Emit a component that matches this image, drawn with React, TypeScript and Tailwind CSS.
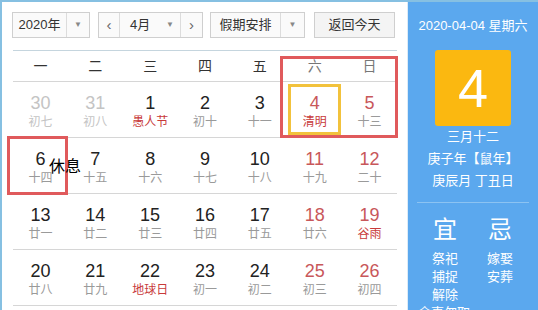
import React from 'react'

type Day = {
  n: number
  lunar: string
  other?: boolean
  weekend?: boolean
  fest?: boolean
}

const weekdays = ['一', '二', '三', '四', '五', '六', '日']

const rows: Day[][] = [
  [
    { n: 30, lunar: '初七', other: true },
    { n: 31, lunar: '初八', other: true },
    { n: 1, lunar: '愚人节', fest: true },
    { n: 2, lunar: '初十' },
    { n: 3, lunar: '十一' },
    { n: 4, lunar: '清明', weekend: true, fest: true },
    { n: 5, lunar: '十三', weekend: true },
  ],
  [
    { n: 6, lunar: '十四' },
    { n: 7, lunar: '十五' },
    { n: 8, lunar: '十六' },
    { n: 9, lunar: '十七' },
    { n: 10, lunar: '十八' },
    { n: 11, lunar: '十九', weekend: true },
    { n: 12, lunar: '二十', weekend: true },
  ],
  [
    { n: 13, lunar: '廿一' },
    { n: 14, lunar: '廿二' },
    { n: 15, lunar: '廿三' },
    { n: 16, lunar: '廿四' },
    { n: 17, lunar: '廿五' },
    { n: 18, lunar: '廿六', weekend: true },
    { n: 19, lunar: '谷雨', weekend: true, fest: true },
  ],
  [
    { n: 20, lunar: '廿八' },
    { n: 21, lunar: '廿九' },
    { n: 22, lunar: '地球日', fest: true },
    { n: 23, lunar: '初一' },
    { n: 24, lunar: '初二' },
    { n: 25, lunar: '初三', weekend: true },
    { n: 26, lunar: '初四', weekend: true },
  ],
]

function Caret() {
  return <span className="text-[8px] leading-none text-[#888]">▼</span>
}

function DayCell({ d }: { d: Day }) {
  const numColor = d.other ? 'text-[#c4c4c4]' : d.weekend ? 'text-[#c8575a]' : 'text-[#222]'
  const lunarColor = d.fest ? 'text-[#c83a3a]' : d.other ? 'text-[#c4c4c4]' : 'text-[#9a9a9a]'
  return (
    <div className="flex h-[55px] flex-col items-center pt-[10px]">
      <span className={`text-[18px] leading-[22px] ${numColor}`}>{d.n}</span>
      <span className={`text-[12px] leading-[16px] ${lunarColor}`}>{d.lunar}</span>
    </div>
  )
}

export default function App() {
  return (
    <div
      className="flex h-[310px] w-[538px] overflow-hidden border-l-2 border-t-2 border-[#86c0e2] bg-white"
      style={{ fontFamily: '"Liberation Sans", "Noto Sans CJK SC", sans-serif' }}
    >
      <div className="w-[405px] shrink-0 bg-white px-[10px] pt-[10px]">
        <div className="flex h-[26px] items-stretch text-[13px] text-[#333]">
          <div className="flex w-[78px] border border-[#cfcfcf] bg-[#fafafa]">
            <span className="flex flex-1 items-center justify-center">2020年</span>
            <span className="flex w-[23px] items-center justify-center border-l border-[#dcdcdc]">
              <Caret />
            </span>
          </div>
          <div className="ml-[8px] flex w-[105px] border border-[#cfcfcf] bg-[#fafafa]">
            <span className="flex w-[21px] items-center justify-center border-r border-[#dcdcdc] text-[15px] text-[#666]">
              ‹
            </span>
            <span className="flex flex-1 items-center justify-between pl-[10px] pr-[6px]">
              4月 <Caret />
            </span>
            <span className="flex w-[22px] items-center justify-center border-l border-[#dcdcdc] text-[15px] text-[#666]">
              ›
            </span>
          </div>
          <div className="ml-[7px] flex w-[95px] border border-[#cfcfcf] bg-[#fafafa]">
            <span className="flex flex-1 items-center justify-center">假期安排</span>
            <span className="flex w-[24px] items-center justify-center border-l border-[#dcdcdc]">
              <Caret />
            </span>
          </div>
          <div className="ml-[9px] flex w-[81px] items-center justify-center border border-[#cfcfcf] bg-[#f4f4f4]">
            返回今天
          </div>
        </div>

        <div className="relative mt-[12px] ml-[1px] border-t border-[#c5d5de]">
          <div className="grid h-[31px] grid-cols-7 border-b border-[#d6d6d6] text-[14px] text-[#333]">
            {weekdays.map((w, i) => (
              <div key={w} className={`flex items-center justify-center ${i > 4 ? 'text-[#777]' : ''}`}>
                {w}
              </div>
            ))}
          </div>
          {rows.map((r, i) => (
            <div key={i} className="grid grid-cols-7 border-b border-[#d6d6d6]">
              {r.map(d => (
                <DayCell key={d.n} d={d} />
              ))}
            </div>
          ))}

          <div className="absolute left-[267px] top-[5px] h-[82px] w-[118px] border-[3px] border-[#e05a5c]" />
          <div className="absolute left-[275px] top-[33px] h-[51px] w-[53px] border-[3px] border-[#f2c23c]" />
          <div className="absolute left-[-6px] top-[85px] h-[59px] w-[61px] border-[3px] border-[#e05a5c]" />
          <span className="absolute left-[36px] top-[106px] text-[16px] leading-[20px] text-black">休息</span>
        </div>
      </div>

      <div className="flex flex-1 flex-col items-center border-l border-[#dcebf7] bg-[#5ba8ee] text-white [&>*]:shrink-0">
        <div className="mt-[15px] text-[13px] leading-[18px]">2020-04-04 星期六</div>
        <div className="mt-[15px] flex h-[76px] w-[76px] items-center justify-center rounded-[3px] bg-[#fbb810] text-[54px] leading-none">
          4
        </div>
        <div className="text-[13px] leading-[22px]">三月十二</div>
        <div className="text-[13px] leading-[22px]">庚子年【鼠年】</div>
        <div className="text-[13px] leading-[22px]">庚辰月 丁丑日</div>
        <div className="mt-[10px] h-px w-[112px] bg-[#8cc3f2]" />
        <div className="mt-[13px] flex w-full gap-[29px] pl-[24px]">
          <div className="flex flex-col items-center text-[13px] leading-[18px]">
            <span className="mb-[6px] text-[24px] leading-[28px]">宜</span>
            <span>祭祀</span>
            <span>捕捉</span>
            <span>解除</span>
          </div>
          <div className="flex flex-col items-center text-[13px] leading-[18px]">
            <span className="mb-[6px] text-[24px] leading-[28px]">忌</span>
            <span>嫁娶</span>
            <span>安葬</span>
          </div>
        </div>
        <div className="self-start pl-[10px] text-[13px] leading-[18px]">余事勿取</div>
      </div>
    </div>
  )
}
